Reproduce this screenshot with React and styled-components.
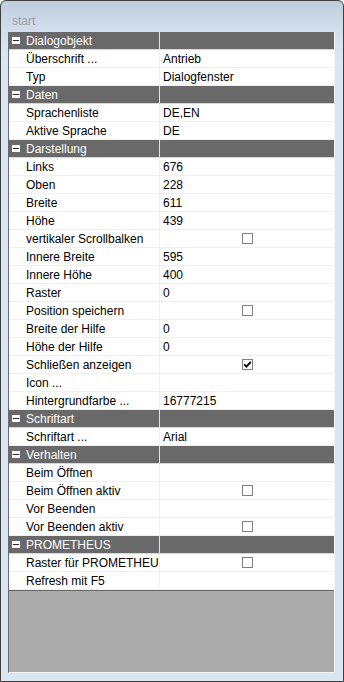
import React from 'react';
import styled, { createGlobalStyle } from 'styled-components';

const GlobalStyle = createGlobalStyle`
  html, body {
    margin: 0;
    padding: 0;
    background: #ffffff;
  }
  body {
    font-family: "Liberation Sans", Arial, sans-serif;
  }
`;

const Window = styled.div`
  width: 344px;
  height: 682px;
  box-sizing: border-box;
  border: 1px solid #3f3f3f;
  border-radius: 6px 6px 0 0;
  background: linear-gradient(to bottom, #bfcddc 0px, #d3dfec 31px, #dbe6f3 60px, #dbe6f3 100%);
  display: flex;
  flex-direction: column;
  overflow: hidden;
`;

const TitleBar = styled.div`
  height: 31px;
  flex: none;
  display: flex;
  align-items: flex-end;
  padding: 0 0 4px 11px;
  box-sizing: border-box;
  font-size: 12px;
  color: #9a9fa6;
`;

const Body = styled.div`
  flex: 1;
  display: flex;
  padding: 0 8px 8px 7px;
  min-height: 0;
`;

const Grid = styled.div`
  flex: 1;
  display: flex;
  flex-direction: column;
  border-left: 1px solid #6b6b6b;
  border-right: 1px solid #f2f2f2;
  border-bottom: 1px solid #f2f2f2;
  background: #ffffff;
`;

const Row = styled.div`
  height: 18px;
  flex: none;
  box-sizing: border-box;
  display: grid;
  grid-template-columns: 150px 1fr;
  border-bottom: 1px solid ${p => (p.$header ? '#d8d8d8' : '#f0f0f0')};
  background: ${p => (p.$header ? '#696969' : '#ffffff')};
  color: ${p => (p.$header ? '#ffffff' : '#000000')};
  font-size: 12px;
  line-height: 17px;
`;

const LabelCell = styled.div`
  display: flex;
  align-items: center;
  padding-left: ${p => (p.$header ? '3px' : '17px')};
  padding-top: 1px;
  white-space: nowrap;
  overflow: hidden;
  gap: 6px;
`;

const ValueCell = styled.div`
  display: flex;
  align-items: center;
  justify-content: ${p => (p.$center ? 'center' : 'flex-start')};
  padding-left: ${p => (p.$center ? '0' : '3px')};
  padding-top: ${p => (p.$center ? '0' : '1px')};
  border-left: 1px solid ${p => (p.$header ? '#e2e2e2' : '#f0f0f0')};
  white-space: nowrap;
  overflow: hidden;
`;

const Toggle = styled.span`
  width: 8px;
  height: 7px;
  background: #ffffff;
  position: relative;
  flex: none;
  margin-top: -1px;
  &::after {
    content: '';
    position: absolute;
    left: 1px;
    right: 1px;
    top: 3px;
    height: 1px;
    background: #2a2a2a;
  }
`;

const Box = styled.span`
  width: 11px;
  height: 11px;
  box-sizing: border-box;
  border: 1px solid #808080;
  background: #ffffff;
  display: flex;
  align-items: center;
  justify-content: center;
`;

const Filler = styled.div`
  flex: 1;
  background: #ababab;
  border-top: 1px solid #696969;
`;

const Check = ({ checked }) => (
  <Box>
    {checked && (
      <svg width="9" height="9" viewBox="0 0 9 9">
        <path d="M1.2 4.4 L3.4 6.6 L7.8 1.8" fill="none" stroke="#000" strokeWidth="1.8" />
      </svg>
    )}
  </Box>
);

const sections = [
  ['Dialogobjekt', [
    ['Überschrift ...', 'Antrieb'],
    ['Typ', 'Dialogfenster'],
  ]],
  ['Daten', [
    ['Sprachenliste', 'DE,EN'],
    ['Aktive Sprache', 'DE'],
  ]],
  ['Darstellung', [
    ['Links', '676'],
    ['Oben', '228'],
    ['Breite', '611'],
    ['Höhe', '439'],
    ['vertikaler Scrollbalken', false],
    ['Innere Breite', '595'],
    ['Innere Höhe', '400'],
    ['Raster', '0'],
    ['Position speichern', false],
    ['Breite der Hilfe', '0'],
    ['Höhe der Hilfe', '0'],
    ['Schließen anzeigen', true],
    ['Icon ...', ''],
    ['Hintergrundfarbe ...', '16777215'],
  ]],
  ['Schriftart', [
    ['Schriftart ...', 'Arial'],
  ]],
  ['Verhalten', [
    ['Beim Öffnen', ''],
    ['Beim Öffnen aktiv', false],
    ['Vor Beenden', ''],
    ['Vor Beenden aktiv', false],
  ]],
  ['PROMETHEUS', [
    ['Raster für PROMETHEUS', false],
    ['Refresh mit F5', ''],
  ]],
];

export default function App() {
  return (
    <>
      <GlobalStyle />
      <Window>
        <TitleBar>start</TitleBar>
        <Body>
          <Grid>
            {sections.map(([title, items]) => (
              <React.Fragment key={title}>
                <Row $header>
                  <LabelCell $header>
                    <Toggle />
                    {title}
                  </LabelCell>
                  <ValueCell $header />
                </Row>
                {items.map(([label, value]) => (
                  <Row key={label}>
                    <LabelCell>{label}</LabelCell>
                    {typeof value === 'boolean' ? (
                      <ValueCell $center>
                        <Check checked={value} />
                      </ValueCell>
                    ) : (
                      <ValueCell>{value}</ValueCell>
                    )}
                  </Row>
                ))}
              </React.Fragment>
            ))}
            <Filler />
          </Grid>
        </Body>
      </Window>
    </>
  );
}
